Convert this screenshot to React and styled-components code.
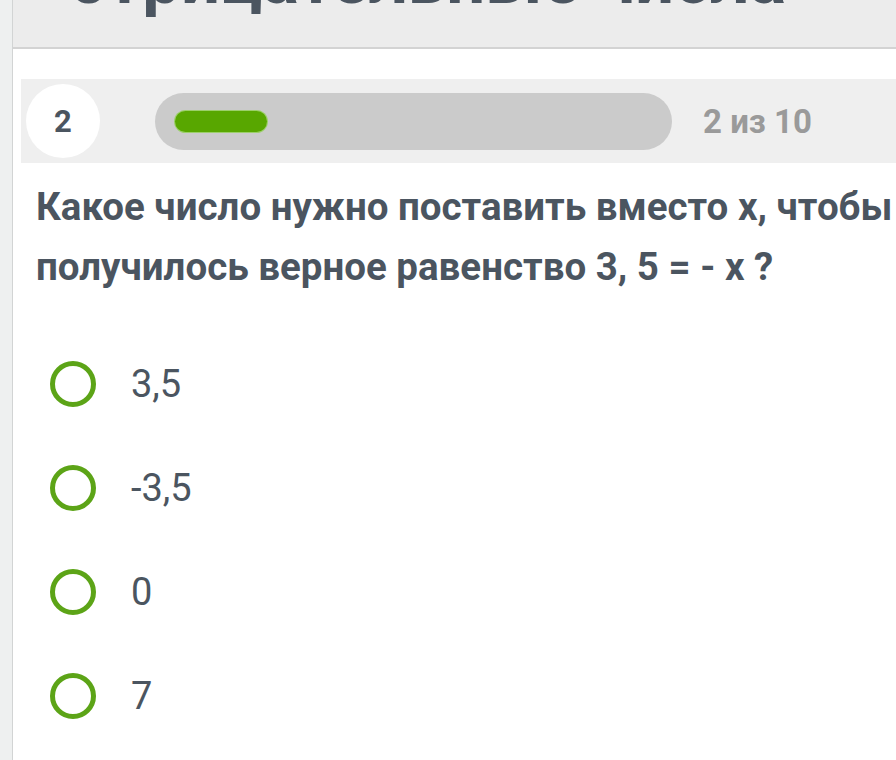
import React from 'react';
import styled, { createGlobalStyle } from 'styled-components';

const GlobalStyle = createGlobalStyle`
    body {
        margin: 0;
        background: #ffffff;
        font-family: Roboto, "Noto Sans", sans-serif;
    }
`;

const Frame = styled.div`
    display: flex;
    width: 896px;
    height: 760px;
    overflow: hidden;
`;

const Rail = styled.div`
    flex: 0 0 12px;
    background: #eef0f0;
    border-right: 1px solid #d2d4d4;
`;

const Main = styled.div`
    flex: 1;
    display: flex;
    flex-direction: column;
    min-width: 0;
`;

const Header = styled.div`
    height: 47px;
    background: #ececec;
    border-bottom: 2px solid #d3d3d3;
    overflow: hidden;
    padding-left: 56px;
`;

const Title = styled.h1`
    margin: -50px 0 0 0;
    font-size: 69px;
    line-height: 60px;
    font-weight: 700;
    color: #4b5560;
    white-space: nowrap;
`;

const ProgressRow = styled.div`
    display: flex;
    align-items: center;
    height: 84px;
    margin: 30px 0 0 8px;
    padding-left: 5px;
    background: #efefef;
`;

const StepBadge = styled.div`
    width: 74px;
    height: 74px;
    border-radius: 50%;
    background: #ffffff;
    display: flex;
    align-items: center;
    justify-content: center;
    font-size: 31px;
    font-weight: 700;
    color: #4b5560;
`;

const Track = styled.div`
    width: 517px;
    height: 57px;
    margin-left: 55px;
    border-radius: 29px;
    background: #cbcbcb;
    display: flex;
    align-items: center;
    padding: 0 20px;
    box-sizing: border-box;
`;

const Fill = styled.div`
    height: 21px;
    border-radius: 11px;
    background: #58a700;
    box-shadow: 0 0 0 1px #9ccf6a;
`;

const Counter = styled.div`
    margin-left: 31px;
    font-size: 33px;
    font-weight: 700;
    color: #9a9a9a;
`;

const Question = styled.p`
    margin: 14px 0 0 23px;
    font-size: 38.5px;
    line-height: 60px;
    font-weight: 700;
    color: #4b5560;
    white-space: nowrap;
`;

const Options = styled.div`
    display: flex;
    flex-direction: column;
    margin: 35px 0 0 37px;
`;

const Option = styled.label`
    display: flex;
    align-items: center;
    height: 104px;
    gap: 35px;
    cursor: pointer;
`;

const Radio = styled.span`
    width: 46px;
    height: 46px;
    box-sizing: border-box;
    border-radius: 50%;
    border: 5px solid #5ca417;
`;

const OptionText = styled.span`
    font-size: 38px;
    color: #4b5560;
`;

const answers = ['3,5', '-3,5', '0', '7'];

export default function App() {
    const step = 2;
    const total = 10;

    return (
        <>
            <GlobalStyle />
            <Frame>
                <Rail />
                <Main>
                    <Header>
                        <Title>отрицательные числа</Title>
                    </Header>
                    <ProgressRow>
                        <StepBadge>{step}</StepBadge>
                        <Track>
                            <Fill style={{ width: `${(step / total) * 100 * 0.2 + 15.2}%` }} />
                        </Track>
                        <Counter>{step} из {total}</Counter>
                    </ProgressRow>
                    <Question>
                        Какое число нужно поставить вместо х, чтобы
                        <br />
                        получилось верное равенство 3, 5 = - х ?
                    </Question>
                    <Options>
                        {answers.map(a => (
                            <Option key={a}>
                                <Radio />
                                <OptionText>{a}</OptionText>
                            </Option>
                        ))}
                    </Options>
                </Main>
            </Frame>
        </>
    );
}
